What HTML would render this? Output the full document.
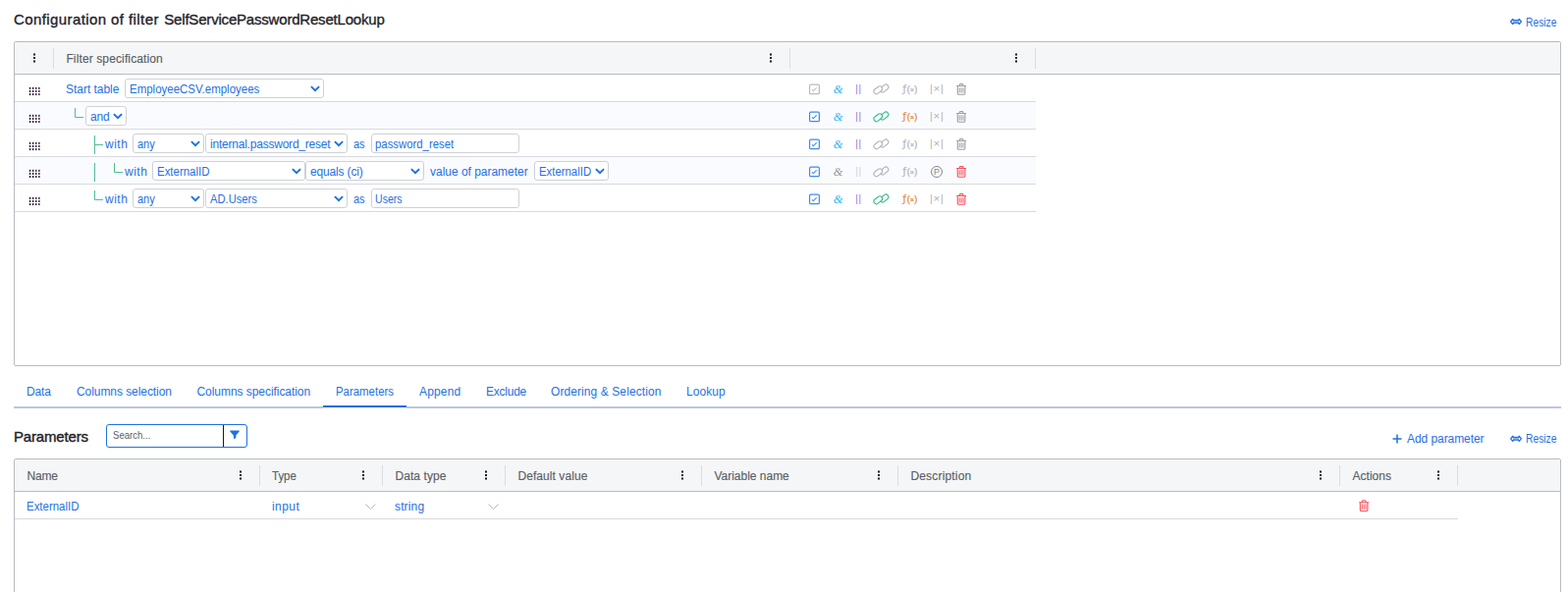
<!DOCTYPE html>
<html lang="en">
<head>
<meta charset="utf-8">
<title>Configuration of filter SelfServicePasswordResetLookup</title>
<style>
*{box-sizing:border-box;margin:0;padding:0}
html,body{width:1597px;height:603px;overflow:hidden;background:#fff}
body{position:relative;font-family:"Liberation Sans",sans-serif;font-size:12px;color:#1f71e2}
.a{position:absolute;white-space:nowrap}
.t{position:absolute;white-space:nowrap;line-height:16px;height:16px}
h1.a{font-size:15px;font-weight:normal;color:#1f2329;line-height:20px;-webkit-text-stroke:.35px #1f2329}
h2.a{font-size:15px;font-weight:normal;color:#1f2329;line-height:20px;-webkit-text-stroke:.4px #1f2329}
.grid{position:absolute;border:1px solid #b9bbbe;background:#fff;border-radius:2px;overflow:hidden}
.hd{position:absolute;left:0;top:0;right:0;height:33px;background:#f5f6f8;border-bottom:1px solid #b9bbbe}
.sep{position:absolute;top:6px;width:1px;height:21px;background:#dcdde0}
.ht{position:absolute;top:9px;line-height:16px;font-size:12px;color:#5b5f66;white-space:nowrap;-webkit-text-stroke:.15px #5b5f66}
.kb{position:absolute;top:11px}
.row{position:absolute;left:0;height:28px;border-bottom:1px solid #d9dadd;background:#fff}
.row.alt{background:#fafbfe}
.dh{position:absolute;left:14px;top:12px;overflow:visible}
.sel{position:absolute;top:4px;height:20px;border:1px solid #cfd1d4;border-radius:3px;background:#fff;line-height:18px;padding:1px 0 0 4px;white-space:nowrap;overflow:hidden;color:#1f71e2}
.inp{position:absolute;top:4px;height:20px;border:1px solid #cfd1d4;border-radius:3px;background:#fff;line-height:18px;padding:1px 0 0 2.5px;white-space:nowrap;color:#1f71e2}
.lb{position:absolute;top:7px;line-height:16px;white-space:nowrap}
.cv{position:absolute}
.sx{display:inline-block;transform-origin:0 50%}
.ti{white-space:nowrap}
</style>
</head>
<body>
<h1 class="a" style="left:14px;top:10px"><span style="letter-spacing:0.408px">Configuration of filter</span><span class="a" style="left:153.3px;top:0;letter-spacing:-0.194px">SelfServicePasswordResetLookup</span></h1>
<div class="a" style="left:1538px;top:15px;line-height:16px;padding-left:16.1px"><svg class="a" style="left:0px;top:3px;overflow:visible" width="12" height="7" viewBox="0 0 12 7"><g transform="translate(0.00 0.60)"><g stroke="#2f73dd" stroke-width="1.3" stroke-linejoin="round"><path d="M.6 3.4L2.7 .8L4.6 3.4L2.7 6Z" fill="#fff"/><path d="M11.4 3.4L9.3 .8L7.4 3.4L9.3 6Z" fill="#fff"/><path d="M4 2.1H8V4.7H4Z" fill="#9fc0f2" stroke="none"/><path d="M3.8 2.1H8.2M3.8 4.7H8.2" fill="none"/></g></g></svg><span class="sx" style="transform:scaleX(0.856)">Resize</span></div>

<div class="grid" style="left:14px;top:42px;width:1576px;height:331px">
<div class="hd"><svg class="kb" style="left:19px" width="2" height="11" viewBox="0 0 2 11"><path d="M0 .4H2V2.4H0ZM0 3.9H2V5.9H0ZM0 7.4H2V9.4H0Z" fill="#15151f"/></svg><div class="sep" style="left:39px"></div><div class="ht" style="left:52.4px"><span style="letter-spacing:0.123px">Filter specification</span></div><svg class="kb" style="left:769px" width="2" height="11" viewBox="0 0 2 11"><path d="M0 .4H2V2.4H0ZM0 3.9H2V5.9H0ZM0 7.4H2V9.4H0Z" fill="#15151f"/></svg><div class="sep" style="left:789px"></div><svg class="kb" style="left:1019px" width="2" height="11" viewBox="0 0 2 11"><path d="M0 .4H2V2.4H0ZM0 3.9H2V5.9H0ZM0 7.4H2V9.4H0Z" fill="#15151f"/></svg><div class="sep" style="left:1039px"></div></div>
<div class="row " style="top:33px;width:1040px"><svg class="dh" width="13" height="10" viewBox="0 0 13 10"><g fill="#25102c" transform="translate(.9 .8)"><rect x="0" y="0" width="1.3" height="2.1"/><rect x="0" y="3.1" width="1.3" height="2.1"/><rect x="0" y="6.2" width="1.3" height="2.1"/><rect x="3.1" y="0" width="1.3" height="2.1"/><rect x="3.1" y="3.1" width="1.3" height="2.1"/><rect x="3.1" y="6.2" width="1.3" height="2.1"/><rect x="6.2" y="0" width="1.3" height="2.1"/><rect x="6.2" y="3.1" width="1.3" height="2.1"/><rect x="6.2" y="6.2" width="1.3" height="2.1"/><rect x="9.3" y="0" width="1.3" height="2.1"/><rect x="9.3" y="3.1" width="1.3" height="2.1"/><rect x="9.3" y="6.2" width="1.3" height="2.1"/></g></svg><span class="lb" style="left:52px;"><span style="letter-spacing:-0.027px">Start table</span></span><div class="sel" style="left:112px;width:203px"><span class="sx" style="transform:scaleX(0.9566)">EmployeeCSV.employees</span><svg class="cv" style="right:3px;top:6px" width="10" height="7" viewBox="0 0 10 7"><path d="M.9 1.1L5 5.1L9.1 1.1" fill="none" stroke="#1f71e2" stroke-width="2" stroke-linecap="butt" stroke-linejoin="miter"/></svg></div><svg class="a" style="left:809px;top:9px;overflow:visible" width="11" height="11" viewBox="0 0 11 11"><g transform="translate(0.00 0.50)"><rect x=".6" y=".6" width="9.8" height="9.6" rx="1.3" fill="none" stroke="#b9bbbe" stroke-width="1.2"/><path d="M3 6L4.4 7.1L7.7 3.9" fill="none" stroke="#b9bbbe" stroke-width="1.1"/></g></svg><span class="a ti" style="left:833.7px;top:7.5px;font-family:'Liberation Serif',serif;font-style:italic;font-size:12.5px;line-height:14px;color:#2fb9f3">&amp;</span><span class="a ti" style="left:856.2px;top:8.5px;font-size:10px;line-height:12px;letter-spacing:.6px;color:#9b6fd3">||</span><svg class="a" style="left:874px;top:9px" width="18" height="12" viewBox="0 0 18 12"><g stroke="#b4b6b9" stroke-width="1.15"><rect x="-4.7" y="-2.6" width="9.4" height="5.2" rx="2.6" fill="none" transform="translate(11.6 5.0) rotate(-38)"/><rect x="-4.7" y="-2.6" width="9.4" height="5.2" rx="2.6" fill="#fff" transform="translate(5.3 6.8) rotate(-38)"/></g></svg><span class="a ti" style="left:904.2px;top:6.9px;font-family:'DejaVu Sans','Liberation Sans',sans-serif;font-size:11.3px;line-height:16px;color:#b0b2b5">ƒ</span><span class="a ti" style="left:908.8px;top:9px;font-size:9px;line-height:12px;color:#b0b2b5;-webkit-text-stroke:.25px #b0b2b5">(<span style="font-size:7.5px;position:relative;top:-.3px">×</span>)</span><span class="a ti" style="left:932px;top:6.5px;font-size:11px;line-height:14px;color:#b0b2b5">|<span style="display:inline-block;width:8.2px;text-align:center;font-size:11.5px;position:relative;top:.6px">×</span>|</span><svg class="a" style="left:959px;top:9px" width="11" height="12" viewBox="0 0 11 12"><g fill="none" stroke="#9d9fa3" stroke-width="1.1"><path d="M.2 2.5H10M3.3 2.4V1.3Q3.3 .6 4 .6H6.2Q6.9 .6 6.9 1.3V2.4"/><path d="M1.3 2.6V10Q1.3 11.3 2.6 11.3H7.6Q8.9 11.3 8.9 10V2.6"/><path d="M3.2 4.3V9.6M5.1 4.3V9.6M7 4.3V9.6" stroke-width="1"/></g></svg></div>
<div class="row alt" style="top:61px;width:1040px"><svg class="dh" width="13" height="10" viewBox="0 0 13 10"><g fill="#25102c" transform="translate(.9 .8)"><rect x="0" y="0" width="1.3" height="2.1"/><rect x="0" y="3.1" width="1.3" height="2.1"/><rect x="0" y="6.2" width="1.3" height="2.1"/><rect x="3.1" y="0" width="1.3" height="2.1"/><rect x="3.1" y="3.1" width="1.3" height="2.1"/><rect x="3.1" y="6.2" width="1.3" height="2.1"/><rect x="6.2" y="0" width="1.3" height="2.1"/><rect x="6.2" y="3.1" width="1.3" height="2.1"/><rect x="6.2" y="6.2" width="1.3" height="2.1"/><rect x="9.3" y="0" width="1.3" height="2.1"/><rect x="9.3" y="3.1" width="1.3" height="2.1"/><rect x="9.3" y="6.2" width="1.3" height="2.1"/></g></svg><svg class="a" style="left:61px;top:0" width="10" height="28"><path d="M.5 6V15.5H9" fill="none" stroke="#4fbf95" stroke-width="1"/></svg><div class="sel" style="left:72px;width:42px"><span style="letter-spacing:-0.174px">and</span><svg class="cv" style="right:3px;top:6px" width="10" height="7" viewBox="0 0 10 7"><path d="M.9 1.1L5 5.1L9.1 1.1" fill="none" stroke="#1f71e2" stroke-width="2" stroke-linecap="butt" stroke-linejoin="miter"/></svg></div><svg class="a" style="left:809px;top:9px;overflow:visible" width="11" height="11" viewBox="0 0 11 11"><g transform="translate(0.00 0.50)"><rect x=".6" y=".6" width="9.8" height="9.6" rx="1.3" fill="none" stroke="#3f8ceb" stroke-width="1.2"/><path d="M3 6L4.4 7.1L7.7 3.9" fill="none" stroke="#3f8ceb" stroke-width="1.1"/></g></svg><span class="a ti" style="left:833.7px;top:7.5px;font-family:'Liberation Serif',serif;font-style:italic;font-size:12.5px;line-height:14px;color:#2fb9f3">&amp;</span><span class="a ti" style="left:856.2px;top:8.5px;font-size:10px;line-height:12px;letter-spacing:.6px;color:#9b6fd3">||</span><svg class="a" style="left:874px;top:9px" width="18" height="12" viewBox="0 0 18 12"><g stroke="#3dbd8d" stroke-width="1.15"><rect x="-4.7" y="-2.6" width="9.4" height="5.2" rx="2.6" fill="none" transform="translate(11.6 5.0) rotate(-38)"/><rect x="-4.7" y="-2.6" width="9.4" height="5.2" rx="2.6" fill="#fafbfe" transform="translate(5.3 6.8) rotate(-38)"/></g></svg><span class="a ti" style="left:904.2px;top:6.9px;font-family:'DejaVu Sans','Liberation Sans',sans-serif;font-size:11.3px;line-height:16px;color:#e0892b">ƒ</span><span class="a ti" style="left:908.8px;top:9px;font-size:9px;line-height:12px;color:#e0892b;-webkit-text-stroke:.25px #e0892b">(<span style="font-size:7.5px;position:relative;top:-.3px">×</span>)</span><span class="a ti" style="left:932px;top:6.5px;font-size:11px;line-height:14px;color:#b0b2b5">|<span style="display:inline-block;width:8.2px;text-align:center;font-size:11.5px;position:relative;top:.6px">×</span>|</span><svg class="a" style="left:959px;top:9px" width="11" height="12" viewBox="0 0 11 12"><g fill="none" stroke="#9d9fa3" stroke-width="1.1"><path d="M.2 2.5H10M3.3 2.4V1.3Q3.3 .6 4 .6H6.2Q6.9 .6 6.9 1.3V2.4"/><path d="M1.3 2.6V10Q1.3 11.3 2.6 11.3H7.6Q8.9 11.3 8.9 10V2.6"/><path d="M3.2 4.3V9.6M5.1 4.3V9.6M7 4.3V9.6" stroke-width="1"/></g></svg></div>
<div class="row " style="top:89px;width:1040px"><svg class="dh" width="13" height="10" viewBox="0 0 13 10"><g fill="#25102c" transform="translate(.9 .8)"><rect x="0" y="0" width="1.3" height="2.1"/><rect x="0" y="3.1" width="1.3" height="2.1"/><rect x="0" y="6.2" width="1.3" height="2.1"/><rect x="3.1" y="0" width="1.3" height="2.1"/><rect x="3.1" y="3.1" width="1.3" height="2.1"/><rect x="3.1" y="6.2" width="1.3" height="2.1"/><rect x="6.2" y="0" width="1.3" height="2.1"/><rect x="6.2" y="3.1" width="1.3" height="2.1"/><rect x="6.2" y="6.2" width="1.3" height="2.1"/><rect x="9.3" y="0" width="1.3" height="2.1"/><rect x="9.3" y="3.1" width="1.3" height="2.1"/><rect x="9.3" y="6.2" width="1.3" height="2.1"/></g></svg><svg class="a" style="left:81px;top:0" width="10" height="28"><path d="M.5 6V25M.5 15.5H9" fill="none" stroke="#4fbf95" stroke-width="1"/></svg><span class="lb" style="left:92px;"><span style="letter-spacing:0.515px">with</span></span><div class="sel" style="left:120px;width:73px"><span class="sx" style="transform:scaleX(0.9148)">any</span><svg class="cv" style="right:3px;top:6px" width="10" height="7" viewBox="0 0 10 7"><path d="M.9 1.1L5 5.1L9.1 1.1" fill="none" stroke="#1f71e2" stroke-width="2" stroke-linecap="butt" stroke-linejoin="miter"/></svg></div><div class="sel" style="left:194px;width:145px"><span style="letter-spacing:-0.218px">internal.password_reset</span><svg class="cv" style="right:3px;top:6px" width="10" height="7" viewBox="0 0 10 7"><path d="M.9 1.1L5 5.1L9.1 1.1" fill="none" stroke="#1f71e2" stroke-width="2" stroke-linecap="butt" stroke-linejoin="miter"/></svg></div><span class="lb" style="left:345px;"><span class="sx" style="transform:scaleX(0.9153)">as</span></span><div class="inp" style="left:363px;width:151px"><span class="sx" style="transform:scaleX(0.9467)">password_reset</span></div><svg class="a" style="left:809px;top:9px;overflow:visible" width="11" height="11" viewBox="0 0 11 11"><g transform="translate(0.00 0.50)"><rect x=".6" y=".6" width="9.8" height="9.6" rx="1.3" fill="none" stroke="#3f8ceb" stroke-width="1.2"/><path d="M3 6L4.4 7.1L7.7 3.9" fill="none" stroke="#3f8ceb" stroke-width="1.1"/></g></svg><span class="a ti" style="left:833.7px;top:7.5px;font-family:'Liberation Serif',serif;font-style:italic;font-size:12.5px;line-height:14px;color:#2fb9f3">&amp;</span><span class="a ti" style="left:856.2px;top:8.5px;font-size:10px;line-height:12px;letter-spacing:.6px;color:#9b6fd3">||</span><svg class="a" style="left:874px;top:9px" width="18" height="12" viewBox="0 0 18 12"><g stroke="#b4b6b9" stroke-width="1.15"><rect x="-4.7" y="-2.6" width="9.4" height="5.2" rx="2.6" fill="none" transform="translate(11.6 5.0) rotate(-38)"/><rect x="-4.7" y="-2.6" width="9.4" height="5.2" rx="2.6" fill="#fff" transform="translate(5.3 6.8) rotate(-38)"/></g></svg><span class="a ti" style="left:904.2px;top:6.9px;font-family:'DejaVu Sans','Liberation Sans',sans-serif;font-size:11.3px;line-height:16px;color:#b0b2b5">ƒ</span><span class="a ti" style="left:908.8px;top:9px;font-size:9px;line-height:12px;color:#b0b2b5;-webkit-text-stroke:.25px #b0b2b5">(<span style="font-size:7.5px;position:relative;top:-.3px">×</span>)</span><span class="a ti" style="left:932px;top:6.5px;font-size:11px;line-height:14px;color:#b0b2b5">|<span style="display:inline-block;width:8.2px;text-align:center;font-size:11.5px;position:relative;top:.6px">×</span>|</span><svg class="a" style="left:959px;top:9px" width="11" height="12" viewBox="0 0 11 12"><g fill="none" stroke="#9d9fa3" stroke-width="1.1"><path d="M.2 2.5H10M3.3 2.4V1.3Q3.3 .6 4 .6H6.2Q6.9 .6 6.9 1.3V2.4"/><path d="M1.3 2.6V10Q1.3 11.3 2.6 11.3H7.6Q8.9 11.3 8.9 10V2.6"/><path d="M3.2 4.3V9.6M5.1 4.3V9.6M7 4.3V9.6" stroke-width="1"/></g></svg></div>
<div class="row alt" style="top:117px;width:1040px"><svg class="dh" width="13" height="10" viewBox="0 0 13 10"><g fill="#25102c" transform="translate(.9 .8)"><rect x="0" y="0" width="1.3" height="2.1"/><rect x="0" y="3.1" width="1.3" height="2.1"/><rect x="0" y="6.2" width="1.3" height="2.1"/><rect x="3.1" y="0" width="1.3" height="2.1"/><rect x="3.1" y="3.1" width="1.3" height="2.1"/><rect x="3.1" y="6.2" width="1.3" height="2.1"/><rect x="6.2" y="0" width="1.3" height="2.1"/><rect x="6.2" y="3.1" width="1.3" height="2.1"/><rect x="6.2" y="6.2" width="1.3" height="2.1"/><rect x="9.3" y="0" width="1.3" height="2.1"/><rect x="9.3" y="3.1" width="1.3" height="2.1"/><rect x="9.3" y="6.2" width="1.3" height="2.1"/></g></svg><svg class="a" style="left:81px;top:0" width="10" height="28"><path d="M.5 6V25" fill="none" stroke="#4fbf95" stroke-width="1"/></svg><svg class="a" style="left:101px;top:0" width="10" height="28"><path d="M.5 6V15.5H9" fill="none" stroke="#4fbf95" stroke-width="1"/></svg><span class="lb" style="left:112px;"><span style="letter-spacing:0.515px">with</span></span><div class="sel" style="left:140px;width:156px"><span class="sx" style="transform:scaleX(0.955)">ExternalID</span><svg class="cv" style="right:3px;top:6px" width="10" height="7" viewBox="0 0 10 7"><path d="M.9 1.1L5 5.1L9.1 1.1" fill="none" stroke="#1f71e2" stroke-width="2" stroke-linecap="butt" stroke-linejoin="miter"/></svg></div><div class="sel" style="left:296px;width:121px"><span style="letter-spacing:-0.16px">equals (ci)</span><svg class="cv" style="right:3px;top:6px" width="10" height="7" viewBox="0 0 10 7"><path d="M.9 1.1L5 5.1L9.1 1.1" fill="none" stroke="#1f71e2" stroke-width="2" stroke-linecap="butt" stroke-linejoin="miter"/></svg></div><span class="lb" style="left:423px;"><span style="letter-spacing:-0.02px">value of parameter</span></span><div class="sel" style="left:529px;width:76px"><span class="sx" style="transform:scaleX(0.9478)">ExternalID</span><svg class="cv" style="right:3px;top:6px" width="10" height="7" viewBox="0 0 10 7"><path d="M.9 1.1L5 5.1L9.1 1.1" fill="none" stroke="#1f71e2" stroke-width="2" stroke-linecap="butt" stroke-linejoin="miter"/></svg></div><svg class="a" style="left:809px;top:9px;overflow:visible" width="11" height="11" viewBox="0 0 11 11"><g transform="translate(0.00 0.50)"><rect x=".6" y=".6" width="9.8" height="9.6" rx="1.3" fill="none" stroke="#3f8ceb" stroke-width="1.2"/><path d="M3 6L4.4 7.1L7.7 3.9" fill="none" stroke="#3f8ceb" stroke-width="1.1"/></g></svg><span class="a ti" style="left:833.7px;top:7.5px;font-family:'Liberation Serif',serif;font-style:italic;font-size:12.5px;line-height:14px;color:#9a9ca0">&amp;</span><span class="a ti" style="left:856.2px;top:8.5px;font-size:10px;line-height:12px;letter-spacing:.6px;color:#cfd0d2">||</span><svg class="a" style="left:874px;top:9px" width="18" height="12" viewBox="0 0 18 12"><g stroke="#b4b6b9" stroke-width="1.15"><rect x="-4.7" y="-2.6" width="9.4" height="5.2" rx="2.6" fill="none" transform="translate(11.6 5.0) rotate(-38)"/><rect x="-4.7" y="-2.6" width="9.4" height="5.2" rx="2.6" fill="#fafbfe" transform="translate(5.3 6.8) rotate(-38)"/></g></svg><span class="a ti" style="left:904.2px;top:6.9px;font-family:'DejaVu Sans','Liberation Sans',sans-serif;font-size:11.3px;line-height:16px;color:#b0b2b5">ƒ</span><span class="a ti" style="left:908.8px;top:9px;font-size:9px;line-height:12px;color:#b0b2b5;-webkit-text-stroke:.25px #b0b2b5">(<span style="font-size:7.5px;position:relative;top:-.3px">×</span>)</span><span class="a ti" style="left:933px;top:8.8px;width:12px;height:12px;border:1px solid #85878b;border-radius:6px;font-size:9px;line-height:10.4px;text-align:center;color:#85878b">P</span><svg class="a" style="left:959px;top:9px" width="11" height="12" viewBox="0 0 11 12"><g fill="none" stroke="#f8505a" stroke-width="1.1"><path d="M.2 2.5H10M3.3 2.4V1.3Q3.3 .6 4 .6H6.2Q6.9 .6 6.9 1.3V2.4"/><path d="M1.3 2.6V10Q1.3 11.3 2.6 11.3H7.6Q8.9 11.3 8.9 10V2.6"/><path d="M3.2 4.3V9.6M5.1 4.3V9.6M7 4.3V9.6" stroke-width="1"/></g></svg></div>
<div class="row " style="top:145px;width:1040px"><svg class="dh" width="13" height="10" viewBox="0 0 13 10"><g fill="#25102c" transform="translate(.9 .8)"><rect x="0" y="0" width="1.3" height="2.1"/><rect x="0" y="3.1" width="1.3" height="2.1"/><rect x="0" y="6.2" width="1.3" height="2.1"/><rect x="3.1" y="0" width="1.3" height="2.1"/><rect x="3.1" y="3.1" width="1.3" height="2.1"/><rect x="3.1" y="6.2" width="1.3" height="2.1"/><rect x="6.2" y="0" width="1.3" height="2.1"/><rect x="6.2" y="3.1" width="1.3" height="2.1"/><rect x="6.2" y="6.2" width="1.3" height="2.1"/><rect x="9.3" y="0" width="1.3" height="2.1"/><rect x="9.3" y="3.1" width="1.3" height="2.1"/><rect x="9.3" y="6.2" width="1.3" height="2.1"/></g></svg><svg class="a" style="left:81px;top:0" width="10" height="28"><path d="M.5 6V15.5H9" fill="none" stroke="#4fbf95" stroke-width="1"/></svg><span class="lb" style="left:92px;"><span style="letter-spacing:0.515px">with</span></span><div class="sel" style="left:120px;width:73px"><span class="sx" style="transform:scaleX(0.9148)">any</span><svg class="cv" style="right:3px;top:6px" width="10" height="7" viewBox="0 0 10 7"><path d="M.9 1.1L5 5.1L9.1 1.1" fill="none" stroke="#1f71e2" stroke-width="2" stroke-linecap="butt" stroke-linejoin="miter"/></svg></div><div class="sel" style="left:194px;width:145px"><span class="sx" style="transform:scaleX(0.933)">AD.Users</span><svg class="cv" style="right:3px;top:6px" width="10" height="7" viewBox="0 0 10 7"><path d="M.9 1.1L5 5.1L9.1 1.1" fill="none" stroke="#1f71e2" stroke-width="2" stroke-linecap="butt" stroke-linejoin="miter"/></svg></div><span class="lb" style="left:345px;"><span class="sx" style="transform:scaleX(0.9153)">as</span></span><div class="inp" style="left:363px;width:151px"><span class="sx" style="transform:scaleX(0.8808)">Users</span></div><svg class="a" style="left:809px;top:9px;overflow:visible" width="11" height="11" viewBox="0 0 11 11"><g transform="translate(0.00 0.50)"><rect x=".6" y=".6" width="9.8" height="9.6" rx="1.3" fill="none" stroke="#3f8ceb" stroke-width="1.2"/><path d="M3 6L4.4 7.1L7.7 3.9" fill="none" stroke="#3f8ceb" stroke-width="1.1"/></g></svg><span class="a ti" style="left:833.7px;top:7.5px;font-family:'Liberation Serif',serif;font-style:italic;font-size:12.5px;line-height:14px;color:#2fb9f3">&amp;</span><span class="a ti" style="left:856.2px;top:8.5px;font-size:10px;line-height:12px;letter-spacing:.6px;color:#9b6fd3">||</span><svg class="a" style="left:874px;top:9px" width="18" height="12" viewBox="0 0 18 12"><g stroke="#3dbd8d" stroke-width="1.15"><rect x="-4.7" y="-2.6" width="9.4" height="5.2" rx="2.6" fill="none" transform="translate(11.6 5.0) rotate(-38)"/><rect x="-4.7" y="-2.6" width="9.4" height="5.2" rx="2.6" fill="#fff" transform="translate(5.3 6.8) rotate(-38)"/></g></svg><span class="a ti" style="left:904.2px;top:6.9px;font-family:'DejaVu Sans','Liberation Sans',sans-serif;font-size:11.3px;line-height:16px;color:#e0892b">ƒ</span><span class="a ti" style="left:908.8px;top:9px;font-size:9px;line-height:12px;color:#e0892b;-webkit-text-stroke:.25px #e0892b">(<span style="font-size:7.5px;position:relative;top:-.3px">×</span>)</span><span class="a ti" style="left:932px;top:6.5px;font-size:11px;line-height:14px;color:#b0b2b5">|<span style="display:inline-block;width:8.2px;text-align:center;font-size:11.5px;position:relative;top:.6px">×</span>|</span><svg class="a" style="left:959px;top:9px" width="11" height="12" viewBox="0 0 11 12"><g fill="none" stroke="#f8505a" stroke-width="1.1"><path d="M.2 2.5H10M3.3 2.4V1.3Q3.3 .6 4 .6H6.2Q6.9 .6 6.9 1.3V2.4"/><path d="M1.3 2.6V10Q1.3 11.3 2.6 11.3H7.6Q8.9 11.3 8.9 10V2.6"/><path d="M3.2 4.3V9.6M5.1 4.3V9.6M7 4.3V9.6" stroke-width="1"/></g></svg></div>
</div>

<div class="a" style="left:14px;top:383px;width:1576px;height:33px;border-bottom:2px solid #bcc5df">
<span class="t" style="left:13px;top:8px"><span style="letter-spacing:-0.162px">Data</span></span><span class="t" style="left:64px;top:8px"><span style="letter-spacing:-0.067px">Columns selection</span></span><span class="t" style="left:186.5px;top:8px"><span style="letter-spacing:-0.053px">Columns specification</span></span><span class="t" style="left:328px;top:8px"><span class="sx" style="transform:scaleX(0.9512)">Parameters</span></span><span class="t" style="left:413px;top:8px"><span style="letter-spacing:0.154px">Append</span></span><span class="t" style="left:481px;top:8px"><span style="letter-spacing:-0.242px">Exclude</span></span><span class="t" style="left:547px;top:8px"><span style="letter-spacing:0.084px">Ordering &amp; Selection</span></span><span class="t" style="left:685px;top:8px"><span style="letter-spacing:0.055px">Lookup</span></span>
<div class="a" style="left:315px;top:30px;width:85px;height:3px;background:#fff;border-top:2px solid #1c6ddf"></div>
</div>

<h2 class="a" style="left:14px;top:435px"><span style="letter-spacing:-0.163px">Parameters</span></h2>
<div class="a" style="left:108px;top:432px;width:144px;height:24px;border:1px solid #1f71e2;border-radius:3px;background:#fff">
<span class="t" style="left:6px;top:2px;font-size:11px;color:#5a5f66"><span class="sx" style="transform:scaleX(0.87)">Search...</span></span>
<div class="a" style="left:118px;top:0;width:1px;height:22px;background:#16181c"></div>
<svg class="a" style="left:124px;top:5px;overflow:visible" width="11" height="9" viewBox="0 0 11 9"><g transform="translate(0.80 0.60)"><path d="M.9 0H9.5Q10.6 0 9.9 .9L6.5 4.9V7.6L4.1 8.4V4.9L.5 .9Q-.2 0 .9 0Z" fill="#1f71e2"/></g></svg>
</div>
<div class="a" style="left:1418px;top:439px;line-height:16px;padding-left:15px;letter-spacing:-0.068px"><svg class="a" style="left:0;top:3px" width="10" height="10" viewBox="0 0 10 10"><path d="M5 .5V9.5M.5 5H9.5" stroke="#1f71e2" stroke-width="1.5" fill="none"/></svg>Add parameter</div>
<div class="a" style="left:1538px;top:439px;line-height:16px;padding-left:16.1px"><svg class="a" style="left:0px;top:4px;overflow:visible" width="12" height="7" viewBox="0 0 12 7"><g transform="translate(0.00 0.40)"><g stroke="#2f73dd" stroke-width="1.3" stroke-linejoin="round"><path d="M.6 3.4L2.7 .8L4.6 3.4L2.7 6Z" fill="#fff"/><path d="M11.4 3.4L9.3 .8L7.4 3.4L9.3 6Z" fill="#fff"/><path d="M4 2.1H8V4.7H4Z" fill="#9fc0f2" stroke="none"/><path d="M3.8 2.1H8.2M3.8 4.7H8.2" fill="none"/></g></g></svg><span class="sx" style="transform:scaleX(0.856)">Resize</span></div>

<div class="grid" style="left:14px;top:467px;width:1576px;height:160px">
<div class="hd"><div class="ht" style="left:12.4px"><span style="letter-spacing:-0.153px">Name</span></div><svg class="kb" style="left:229px" width="2" height="11" viewBox="0 0 2 11"><path d="M0 .4H2V2.4H0ZM0 3.9H2V5.9H0ZM0 7.4H2V9.4H0Z" fill="#15151f"/></svg><div class="sep" style="left:249px"></div><div class="ht" style="left:262.4px"><span class="sx" style="transform:scaleX(0.9571)">Type</span></div><svg class="kb" style="left:354px" width="2" height="11" viewBox="0 0 2 11"><path d="M0 .4H2V2.4H0ZM0 3.9H2V5.9H0ZM0 7.4H2V9.4H0Z" fill="#15151f"/></svg><div class="sep" style="left:374px"></div><div class="ht" style="left:387.4px"><span style="letter-spacing:0.093px">Data type</span></div><svg class="kb" style="left:479px" width="2" height="11" viewBox="0 0 2 11"><path d="M0 .4H2V2.4H0ZM0 3.9H2V5.9H0ZM0 7.4H2V9.4H0Z" fill="#15151f"/></svg><div class="sep" style="left:499px"></div><div class="ht" style="left:512.4px"><span style="letter-spacing:0.074px">Default value</span></div><svg class="kb" style="left:679px" width="2" height="11" viewBox="0 0 2 11"><path d="M0 .4H2V2.4H0ZM0 3.9H2V5.9H0ZM0 7.4H2V9.4H0Z" fill="#15151f"/></svg><div class="sep" style="left:699px"></div><div class="ht" style="left:712.4px"><span style="letter-spacing:-0.007px">Variable name</span></div><svg class="kb" style="left:879px" width="2" height="11" viewBox="0 0 2 11"><path d="M0 .4H2V2.4H0ZM0 3.9H2V5.9H0ZM0 7.4H2V9.4H0Z" fill="#15151f"/></svg><div class="sep" style="left:899px"></div><div class="ht" style="left:912.4px"><span style="letter-spacing:0.18px">Description</span></div><svg class="kb" style="left:1329px" width="2" height="11" viewBox="0 0 2 11"><path d="M0 .4H2V2.4H0ZM0 3.9H2V5.9H0ZM0 7.4H2V9.4H0Z" fill="#15151f"/></svg><div class="sep" style="left:1349px"></div><div class="ht" style="left:1362.4px"><span style="letter-spacing:0.05px">Actions</span></div><svg class="kb" style="left:1449px" width="2" height="11" viewBox="0 0 2 11"><path d="M0 .4H2V2.4H0ZM0 3.9H2V5.9H0ZM0 7.4H2V9.4H0Z" fill="#15151f"/></svg><div class="sep" style="left:1469px"></div></div>
<div class="row" style="top:33px;width:1470px">
<span class="lb" style="left:12px;"><span class="sx" style="transform:scaleX(0.955)">ExternalID</span></span><span class="lb" style="left:262px;"><span style="letter-spacing:0.436px">input</span></span><svg class="a" style="left:357px;top:12px" width="11" height="6" viewBox="0 0 11 6"><path d="M.5 .5L5.5 5.5L10.5 .5" fill="none" stroke="#b8babd" stroke-width="1"/></svg><span class="lb" style="left:387px;"><span style="letter-spacing:0.143px">string</span></span><svg class="a" style="left:482px;top:12px" width="11" height="6" viewBox="0 0 11 6"><path d="M.5 .5L5.5 5.5L10.5 .5" fill="none" stroke="#b8babd" stroke-width="1"/></svg>
<svg class="a" style="left:1369px;top:8px;overflow:visible" width="11" height="12" viewBox="0 0 11 12"><g transform="translate(0.00 0.20)"><g fill="none" stroke="#f8505a" stroke-width="1.1"><path d="M.2 2.5H10M3.3 2.4V1.3Q3.3 .6 4 .6H6.2Q6.9 .6 6.9 1.3V2.4"/><path d="M1.3 2.6V10Q1.3 11.3 2.6 11.3H7.6Q8.9 11.3 8.9 10V2.6"/><path d="M3.2 4.3V9.6M5.1 4.3V9.6M7 4.3V9.6" stroke-width="1"/></g></g></svg>
</div>
</div>
</body>
</html>
